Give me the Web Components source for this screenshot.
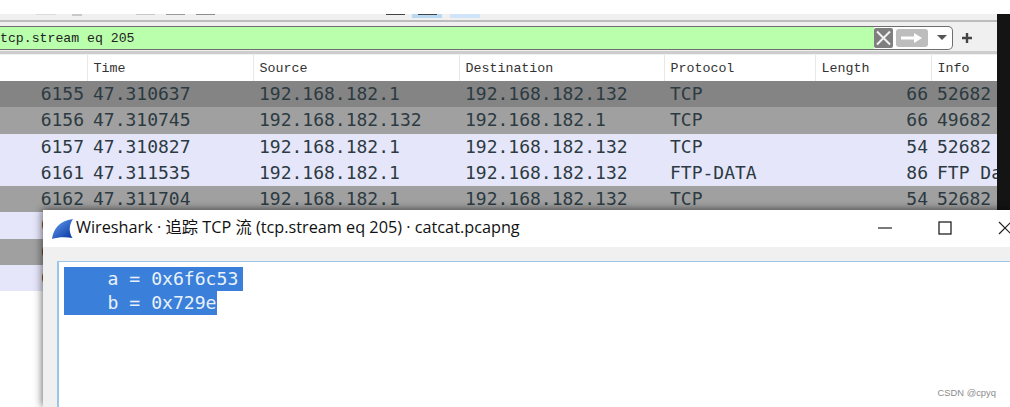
<!DOCTYPE html>
<html>
<head>
<meta charset="utf-8">
<title>Wireshark</title>
<style>
html,body{margin:0;padding:0;background:#fff;}
body{width:1010px;height:407px;overflow:hidden;position:relative;font-family:"Liberation Mono",monospace;}
</style>
</head>
<body>
<ws-main>
  <ws-toolbar></ws-toolbar>
  <ws-filter value="tcp.stream eq 205"></ws-filter>
  <ws-packets>
    <ws-packet tone="dark" no="6155" time="47.310637" src="192.168.182.1" dst="192.168.182.132" proto="TCP" len="66" info="52682"></ws-packet>
    <ws-packet tone="mid" no="6156" time="47.310745" src="192.168.182.132" dst="192.168.182.1" proto="TCP" len="66" info="49682"></ws-packet>
    <ws-packet tone="lav" no="6157" time="47.310827" src="192.168.182.1" dst="192.168.182.132" proto="TCP" len="54" info="52682"></ws-packet>
    <ws-packet tone="lav" no="6161" time="47.311535" src="192.168.182.1" dst="192.168.182.132" proto="FTP-DATA" len="86" info="FTP Da"></ws-packet>
    <ws-packet tone="mid" no="6162" time="47.311704" src="192.168.182.1" dst="192.168.182.132" proto="TCP" len="54" info="52682"></ws-packet>
    <ws-packet tone="lav" no="6"></ws-packet>
    <ws-packet tone="mid" no="6"></ws-packet>
    <ws-packet tone="lav" no="6"></ws-packet>
  </ws-packets>
</ws-main>
<ws-stream-dialog heading="Wireshark · 追踪 TCP 流 (tcp.stream eq 205) · catcat.pcapng">    a = 0x6f6c53
    b = 0x729e</ws-stream-dialog>
<ws-watermark>CSDN @cpyq</ws-watermark>

<script>
// small helper, every element just sets its shadow html once
function shadow(el, html){
    el.attachShadow({mode:'open'}).innerHTML = html;
}

class WsMain extends HTMLElement {
    constructor(){
        super();
        shadow(this, `
<style>
:host{display:flex;width:1010px;height:407px;flex-direction:column;box-sizing:border-box;padding-top:14px;overflow:hidden;}
.wrap{display:flex;flex:1;min-height:0;}
.left{width:997px;display:flex;flex-direction:column;}
.black{width:13px;height:196px;background:#141414;}
</style>
<div class="wrap"><div class="left"><slot></slot></div><div class="black"></div></div>`);
    }
}

class WsToolbar extends HTMLElement {
    constructor(){
        super();
        // only the bottom edge of the icons is left on screen
        const bits = [[36,20,'#dcdcdc',1],[72,10,'#c8c8c8',2],[136,19,'#c8c8c8',1],[166,19,'#9a9a9a',1],[196,19,'#8c8c8c',1],[386,19,'#444',1],
            [412,30,'linear-gradient(#444,#444) center top/19px 1px no-repeat,#b9d8f2',4],[450,30,'#cfe4f7',4]];
        let x = 0, html = '';
        for(const [at,w,c,h] of bits){
            html += `<i style="margin-left:${at-x}px;width:${w}px;height:${h}px;background:${c}"></i>`;
            x = at+w;
        }
        shadow(this, `
<style>
:host{display:flex;height:6px;background:#f0f0f0;align-items:flex-start;}
i{display:block;flex:none;}
</style>${html}`);
    }
}

class WsFilter extends HTMLElement {
    constructor(){
        super();
        shadow(this, `
<style>
:host{display:block;height:35px;box-sizing:border-box;background:#f0f0f0;border-top:2px solid #bcbcbc;padding-top:4px;}
.row{display:flex;align-items:center;}
.box{width:954px;height:24px;box-sizing:border-box;margin-left:-1px;display:flex;align-items:center;background:#fff;border:1px solid #6e6e6e;border-left:0;border-radius:0 5px 5px 0;overflow:hidden;}
.green{flex:1;height:100%;background:#b9ffac;padding:2px 0 0 1px;box-sizing:border-box;font:13.2px/20px "Liberation Mono",monospace;color:#222;display:flex;align-items:center;}
.x{width:19px;height:20px;background:#7f7f7f;border-radius:2px;display:flex;margin:0 3px 0 0;}
.go{width:32px;height:18px;background:#bdbdbd;border-radius:3px;display:flex;align-items:center;justify-content:center;}
.drop{width:24px;box-sizing:border-box;padding-left:3px;display:flex;justify-content:center;}
.plus{margin-left:8px;display:flex;}
.line{height:3px;background:#cdcdcd;margin-top:1px;}
</style>
<div class="row">
  <div class="box">
    <div class="green"><span id="v"></span></div>
    <div class="x"><svg width="19" height="20" viewBox="0 0 19 20"><path d="M3 3.5 16 16.5M16 3.5 3 16.5" stroke="#f2f2f2" stroke-width="2" fill="none"/></svg></div>
    <div class="go"><svg width="28" height="14" viewBox="0 0 28 14"><path d="M3 5.5H16V2L24 7 16 12V8.5H3Z" fill="#fff"/></svg></div>
    <div class="drop"><svg width="10" height="6" viewBox="0 0 10 6"><path d="M0 0H10L5 5Z" fill="#555"/></svg></div>
  </div>
  <div class="plus"><svg width="12" height="12" viewBox="0 0 12 12"><path d="M6 1V11M1 6H11" stroke="#444" stroke-width="2.4" fill="none"/></svg></div>
</div>
<div class="line"></div>`);
        this.shadowRoot.getElementById('v').textContent = this.getAttribute('value');
    }
}

const COLS = '88px 166px 206px 205px 151px 116px 65px';

class WsPackets extends HTMLElement {
    constructor(){
        super();
        const heads = ['', 'Time', 'Source', 'Destination', 'Protocol', 'Length', 'Info'];
        shadow(this, `
<style>
:host{display:block;}
.head{display:grid;grid-template-columns:${COLS};height:26px;background:#fff;overflow:hidden;}
.head div{font:13.3px/28px "Liberation Mono",monospace;color:#333;padding-left:5.5px;border-right:1px solid #e8e8e8;box-sizing:border-box;white-space:nowrap;}
.head div:last-child{border-right:0;}
</style>
<div class="head">${heads.map(h => `<div>${h}</div>`).join('')}</div>
<slot></slot>`);
    }
}

class WsPacket extends HTMLElement {
    constructor(){
        super();
        const a = n => this.getAttribute(n) || '';
        shadow(this, `
<style>
:host{display:grid;grid-template-columns:${COLS};height:26.25px;overflow:hidden;font:18px/25px "DejaVu Sans Mono",monospace;color:#2c3a42;white-space:pre;}
:host([tone=dark]){background:#848484;}
:host([tone=mid]){background:#a0a0a0;}
:host([tone=lav]){background:#e6e6fa;}
div{padding-left:5px;overflow:hidden;}
.r{text-align:right;padding:0 4px 0 0;}
.no-left{padding-left:41px;text-align:left;}
</style>
<div class="${a('time') ? 'r' : 'no-left'}">${a('no')}</div><div>${a('time')}</div><div>${a('src')}</div><div>${a('dst')}</div><div>${a('proto')}</div><div class="r">${a('len')}</div><div>${a('info')}</div>`);
    }
}

class WsStreamDialog extends HTMLElement {
    constructor(){
        super();
        shadow(this, `
<style>
:host{position:absolute;left:43px;top:210px;width:967px;height:197px;display:flex;flex-direction:column;overflow:hidden;background:#f0f0f0;box-shadow:-2px 0 8px rgba(0,0,0,.35),0 -2px 6px rgba(0,0,0,.25);}
.title{height:37px;background:#fff;display:flex;align-items:center;padding-left:9px;flex:none;}
.shark{flex:none;margin-right:3px;}
.name{font:16.25px/32px "Open Sans","Noto Sans CJK SC",sans-serif;color:#111;white-space:nowrap;flex:1;padding-bottom:4px;}
.btns{display:flex;align-items:center;position:absolute;left:835px;top:0;height:36px;}
.body{padding:14px 0 0 14px;flex:1;}
.text{height:200px;box-sizing:border-box;background:#fff;border:1px solid #9cc5ea;border-width:1px 0 0 2px;padding:5px 0 0 5px;}
pre{margin:0;font:18.1px/24px "DejaVu Sans Mono",monospace;color:#e9f2fb;}
.sel{display:block;width:fit-content;background:#3a7fd9;}
</style>
<div class="title">
  <svg class="shark" width="21" height="20" viewBox="0 0 21 20"><defs><linearGradient id="fin" x1="0.1" y1="0.1" x2="0.8" y2="0.9"><stop offset="0" stop-color="#5b9aea"/><stop offset="1" stop-color="#1440ab"/></linearGradient></defs><path d="M0 20C1.500 10 7 2 21 0 17 6 16.500 13 20.500 19 13 17.500 6 18 0 20Z" fill="url(#fin)"/></svg>
  <span class="name" id="h"></span>
  <div class="btns">
    <svg width="14" height="14" viewBox="0 0 14 14"><path d="M0 7H14" stroke="#222" stroke-width="1.2"/></svg>
    <svg style="margin-left:46px" width="14" height="14" viewBox="0 0 14 14"><rect x="1" y="1" width="12" height="12" fill="none" stroke="#222" stroke-width="1.3"/></svg>
    <svg style="margin-left:46px" width="14" height="14" viewBox="0 0 14 14"><path d="M1 1 13 13M13 1 1 13" stroke="#222" stroke-width="1.2"/></svg>
  </div>
</div>
<div class="body"><div class="text"><pre id="t"></pre></div></div>`);
        this.shadowRoot.getElementById('h').textContent = this.getAttribute('heading');
        // one selected block per line, the newline shows as a bit of extra width
        const lines = this.textContent.split('\n');
        const pre = this.shadowRoot.getElementById('t');
        lines.forEach((l, i) => {
            const s = document.createElement('span');
            s.className = 'sel';
            s.textContent = l;
            if(i < lines.length-1) s.style.paddingRight = '5px';
            pre.appendChild(s);
        });
    }
}

class WsWatermark extends HTMLElement {
    constructor(){
        super();
        shadow(this, `
<style>
:host{position:absolute;right:14px;bottom:9px;font:9.4px "Liberation Sans",sans-serif;color:#8c8c8c;}
</style><slot></slot>`);
    }
}

customElements.define('ws-main', WsMain);
customElements.define('ws-toolbar', WsToolbar);
customElements.define('ws-filter', WsFilter);
customElements.define('ws-packets', WsPackets);
customElements.define('ws-packet', WsPacket);
customElements.define('ws-stream-dialog', WsStreamDialog);
customElements.define('ws-watermark', WsWatermark);
</script>
</body>
</html>
